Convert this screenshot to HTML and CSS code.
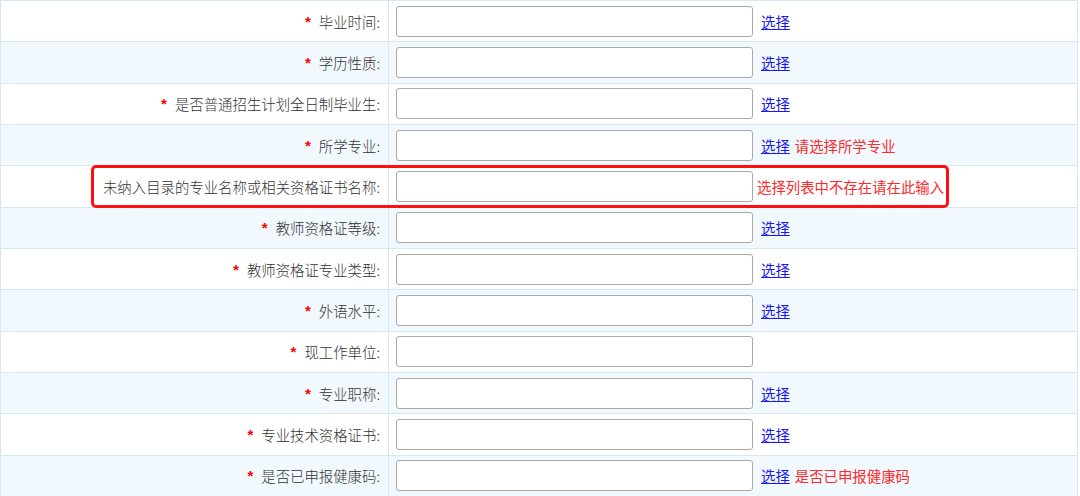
FILE: index.html
```html
<!DOCTYPE html>
<html lang="zh-CN">
<head>
<meta charset="utf-8">
<link rel="stylesheet" href="styles.css">
</head>
<body>
<div class="form">
  <div class="row"><div class="label"><span class="req">*</span>毕业时间:</div><div class="field"><input class="inp" type="text"><a class="pick" href="#">选择</a></div></div>
  <div class="row alt"><div class="label"><span class="req">*</span>学历性质:</div><div class="field"><input class="inp" type="text"><a class="pick" href="#">选择</a></div></div>
  <div class="row"><div class="label"><span class="req">*</span>是否普通招生计划全日制毕业生:</div><div class="field"><input class="inp" type="text"><a class="pick" href="#">选择</a></div></div>
  <div class="row alt"><div class="label"><span class="req">*</span>所学专业:</div><div class="field"><input class="inp" type="text"><a class="pick" href="#">选择</a><span class="hint">请选择所学专业</span></div></div>
  <div class="row marked"><div class="label">未纳入目录的专业名称或相关资格证书名称:</div><div class="field"><input class="inp" type="text"><span class="hint near">选择列表中不存在请在此输入</span></div><div class="highlight"></div></div>
  <div class="row alt"><div class="label"><span class="req">*</span>教师资格证等级:</div><div class="field"><input class="inp" type="text"><a class="pick" href="#">选择</a></div></div>
  <div class="row"><div class="label"><span class="req">*</span>教师资格证专业类型:</div><div class="field"><input class="inp" type="text"><a class="pick" href="#">选择</a></div></div>
  <div class="row alt"><div class="label"><span class="req">*</span>外语水平:</div><div class="field"><input class="inp" type="text"><a class="pick" href="#">选择</a></div></div>
  <div class="row"><div class="label"><span class="req">*</span>现工作单位:</div><div class="field"><input class="inp" type="text"></div></div>
  <div class="row alt"><div class="label"><span class="req">*</span>专业职称:</div><div class="field"><input class="inp" type="text"><a class="pick" href="#">选择</a></div></div>
  <div class="row"><div class="label"><span class="req">*</span>专业技术资格证书:</div><div class="field"><input class="inp" type="text"><a class="pick" href="#">选择</a></div></div>
  <div class="row alt"><div class="label"><span class="req">*</span>是否已申报健康码:</div><div class="field"><input class="inp" type="text"><a class="pick" href="#">选择</a><span class="hint">是否已申报健康码</span></div></div>
</div>
</body>
</html>
```
FILE: styles.css
```css
html, body {
  margin: 0;
  padding: 0;
  background: #ffffff;
}
body {
  font-family: "Noto Sans CJK SC", "Microsoft YaHei", sans-serif;
  font-size: 14.4px;
  color: #333333;
  overflow: hidden;
}
.form {
  width: 1078px;
  border-top: 1px solid #d6e7f6;
  border-left: 1px solid #d6e7f6;
  border-right: 1px solid #d6e7f6;
  box-sizing: border-box;
}
.row {
  position: relative;
  display: grid;
  grid-template-columns: 388px 1fr;
  height: 41.33px;
  box-sizing: border-box;
  border-bottom: 1px solid #d6e7f6;
  background: #ffffff;
}
.row.alt {
  background: #f1f8fe;
}
.label {
  display: flex;
  align-items: center;
  justify-content: flex-end;
  padding-right: 8px;
  border-right: 1px solid #d6e7f6;
  white-space: nowrap;
  font-weight: 300;
}
.req {
  color: #ff0000;
  margin-right: 8px;
  font-size: 15px;
  font-weight: 700;
  font-family: "Liberation Sans", sans-serif;
}
.field {
  display: flex;
  align-items: center;
  padding-left: 7px;
  white-space: nowrap;
}
.inp {
  width: 357px;
  height: 31px;
  box-sizing: border-box;
  border: 1px solid #a9a9a9;
  border-radius: 3px;
  background: #ffffff;
  margin: 0;
  padding: 0 4px;
  font: inherit;
}
.pick {
  margin-left: 8px;
  color: #1a1aee;
  text-decoration: underline;
}
.hint {
  color: #ff2a2a;
  margin-left: 5px;
}
.hint.near {
  margin-left: 4px;
}
.highlight {
  position: absolute;
  left: 90px;
  top: -1px;
  width: 858px;
  height: 43px;
  box-sizing: border-box;
  border: 3.5px solid #ff1010;
  border-radius: 5px;
  pointer-events: none;
}
```
